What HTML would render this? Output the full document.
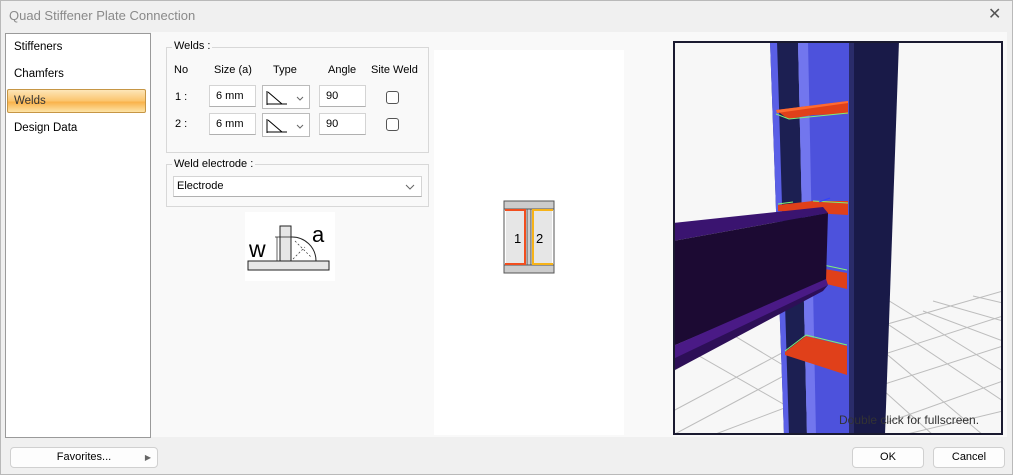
<!DOCTYPE html>
<html><head><meta charset="utf-8"><style>
*{box-sizing:border-box;margin:0;padding:0}
body{width:1013px;height:475px;background:#f0f0f0;font-family:"Liberation Sans",sans-serif;font-size:11px;color:#000;position:relative;overflow:hidden}
.abs{position:absolute}
.win{left:0;top:0;width:1013px;height:475px;border:1px solid #b9b9b9;background:#f0f0f0}
.title{left:9px;top:8px;font-size:13px;color:#8a8a8a}
.close{left:988px;top:4px;font-size:16px;color:#555}
.main{left:151px;top:32px;width:856px;height:405px;background:#f9f9f9}
.list{left:5px;top:33px;width:146px;height:405px;background:#fff;border:1px solid #9a9a9a}
.li{position:absolute;left:9px;font-size:11.5px}
.sel{left:7px;top:89px;width:139px;height:24px;border:1px solid #c69645;border-radius:2px;background:linear-gradient(#fde6b8,#fbc46d 50%,#f9b24a 55%,#fde3a6);}
.grp{border:1px solid #d8d8d8}
.gl{position:absolute;background:#f9f9f9;padding:0 2px;font-size:11px}
.inp{position:absolute;background:#fff;border:1px solid #d4d4d4;border-bottom-color:#b0b0b0;height:22px;padding:4px 6px;font-size:11px}
.cb{position:absolute;width:13px;height:13px;border:1px solid #555;border-radius:3px;background:#fff}
.btn{position:absolute;background:#fdfdfd;border:1px solid #d0d0d0;border-radius:4px;height:21px;font-size:11px;text-align:center;line-height:19px}
</style></head><body>
<div class="abs win"></div>
<div class="abs title">Quad Stiffener Plate Connection</div>
<div class="abs close">✕</div>
<div class="abs main"></div>
<div class="abs list"></div>
<div class="abs sel"></div>
<div class="li" style="left:14px;top:41px">Stiffeners</div>
<div class="li" style="left:14px;top:68px">Chamfers</div>
<div class="li" style="left:14px;top:95px;color:#333">Welds</div>
<div class="li" style="left:14px;top:122px">Design Data</div>

<div class="abs grp" style="left:166px;top:47px;width:263px;height:106px"></div>
<div class="gl" style="left:172px;top:40px">Welds :</div>
<div class="abs" style="left:174px;top:64px">No</div>
<div class="abs" style="left:214px;top:64px">Size (a)</div>
<div class="abs" style="left:273px;top:64px">Type</div>
<div class="abs" style="left:328px;top:64px">Angle</div>
<div class="abs" style="left:371px;top:64px">Site Weld</div>
<div class="abs" style="left:175px;top:91px">1 :</div>
<div class="abs" style="left:175px;top:118px">2 :</div>
<div class="inp" style="left:209px;top:85px;width:47px">6 mm</div>
<div class="inp" style="left:209px;top:113px;width:47px">6 mm</div>
<div class="inp" style="left:262px;top:85px;width:48px;height:24px;border-color:#bbb;padding:0"><svg width="46" height="22"><path d="M4 5V19M4 18H24M5 6L19 18" stroke="#000" fill="none"/><path d="M34 11l3 3 3-3" stroke="#666" fill="none"/></svg></div>
<div class="inp" style="left:262px;top:113px;width:48px;height:24px;border-color:#bbb;padding:0"><svg width="46" height="22"><path d="M4 5V19M4 18H24M5 6L19 18" stroke="#000" fill="none"/><path d="M34 11l3 3 3-3" stroke="#666" fill="none"/></svg></div>
<div class="inp" style="left:319px;top:85px;width:47px">90</div>
<div class="inp" style="left:319px;top:113px;width:47px">90</div>
<div class="cb" style="left:386px;top:91px"></div>
<div class="cb" style="left:386px;top:118px"></div>

<div class="abs grp" style="left:166px;top:164px;width:263px;height:43px"></div>
<div class="gl" style="left:172px;top:158px">Weld electrode :</div>
<div class="inp" style="left:173px;top:176px;width:249px;height:21px;padding:3px 3px">Electrode<svg class="abs" style="right:6px;top:7px" width="10" height="6"><path d="M1 1l4 4 4-4" stroke="#666" fill="none"/></svg></div>

<div class="abs" style="left:245px;top:212px;width:90px;height:69px;background:#fff">
<svg width="90" height="69"><rect x="3" y="49" width="81" height="9" fill="#e6e6e6" stroke="#222"/><rect x="35" y="14" width="11" height="35" fill="#e6e6e6" stroke="#222"/><path d="M46 25A24 24 0 0 1 71 49" stroke="#222" fill="none"/><path d="M46 25H30M46 49H30M32 25V49" stroke="#222" stroke-width=".7" fill="none"/><path d="M50 29L66 45M48 47L60 35" stroke="#333" stroke-width=".7" stroke-dasharray="2 2" fill="none"/><text x="4" y="45" font-size="23" font-family="Liberation Sans">w</text><text x="67" y="30" font-size="22" font-family="Liberation Sans">a</text></svg></div>

<div class="abs" style="left:434px;top:50px;width:190px;height:385px;background:#fff"></div>
<svg class="abs" style="left:503px;top:200px" width="52" height="74">
<rect x="1" y="1" width="50" height="72" fill="#fff" stroke="#555"/>
<path d="M1 1H51V9H1ZM1 65H51V73H1ZM24 9H28V65H24Z" fill="#ccc" stroke="#555"/>
<rect x="3" y="10" width="20" height="55" fill="#e6e6e6"/><rect x="29" y="10" width="20" height="55" fill="#e6e6e6"/>
<path d="M2 10H22V64H2" stroke="#f24e1e" stroke-width="2" fill="none"/>
<path d="M50 10H30V64H50" stroke="#f7b318" stroke-width="2" fill="none"/>
<text x="11" y="43" font-size="13" font-family="Liberation Sans">1</text><text x="33" y="43" font-size="13" font-family="Liberation Sans">2</text></svg>

<svg class="abs" style="left:673px;top:41px" width="330" height="394">
<rect x="0" y="0" width="330" height="394" fill="#f7f7f7"/>
<g stroke="#bdbdbd" stroke-width="1" fill="none">
<path d="M0 330L140 250M0 370L150 290M0 394L120 330M40 394L130 360M190 290L330 250M190 320L330 275M190 350L330 305M190 390L330 340M230 394L330 370"/>
<path d="M0 300L140 380M20 270L120 330M200 250L330 330M210 280L330 360M250 270L330 300M210 310L310 394M200 340L260 394M260 260L330 280M300 255L330 262"/>
</g>
<path d="M97 0H125L134 394H111Z" fill="#1c1f52"/>
<path d="M97 0H104L116 394H111Z" fill="#5a5fe6"/>
<path d="M125 0H177L177 394H134Z" fill="#4d52dc"/>
<path d="M125 0H135L143 394H134Z" fill="#7276ee"/>
<path d="M177 0H226L212 394H177Z" fill="#191a48"/>
<path d="M176 0H181L181 394H176Z" fill="#2a2c6a"/>
<path d="M103 69L175 60V73L140 74L115 78Z" fill="#e0401a"/><path d="M103 69L175 60V62L104 72Z" fill="#ff6a30"/><path d="M103 73L116 78L175 72" stroke="#7df07a" fill="none"/>
<path d="M105 164L140 160H175V174L105 170Z" fill="#e0401a"/><path d="M105 163L120 161M140 160L175 162" stroke="#7df07a"/>
<path d="M141 226L174 232V248L141 240Z" fill="#e0401a"/><path d="M141 222L174 229" stroke="#7df07a"/>
<path d="M112 311L133 295L174 305V334L112 314Z" fill="#e0401a"/><path d="M133 294L174 304M112 310L133 294" stroke="#7df07a"/>
<path d="M0 182L150 166L155 172L0 200Z" fill="#3a1470"/>
<path d="M0 200L155 172L153 240L0 305Z" fill="#1c0a33"/>
<path d="M0 305L153 238L155 244L0 320Z" fill="#4a1a86"/>
<path d="M0 318L155 244L150 250L0 330Z" fill="#2d0f57"/>
<path d="M146 161L157 157" stroke="#3040ff"/>
<text x="166" y="383" font-size="12" fill="#333" font-family="Liberation Sans">Double click for fullscreen.</text>
<rect x="1" y="1" width="328" height="392" fill="none" stroke="#1a1a30" stroke-width="2"/>
</svg>

<div class="btn" style="left:10px;top:447px;width:148px">Favorites...<span style="position:absolute;right:6px;top:0;font-size:8px;color:#666">▶</span></div>
<div class="btn" style="left:852px;top:447px;width:72px">OK</div>
<div class="btn" style="left:933px;top:447px;width:72px">Cancel</div>
</body></html>
